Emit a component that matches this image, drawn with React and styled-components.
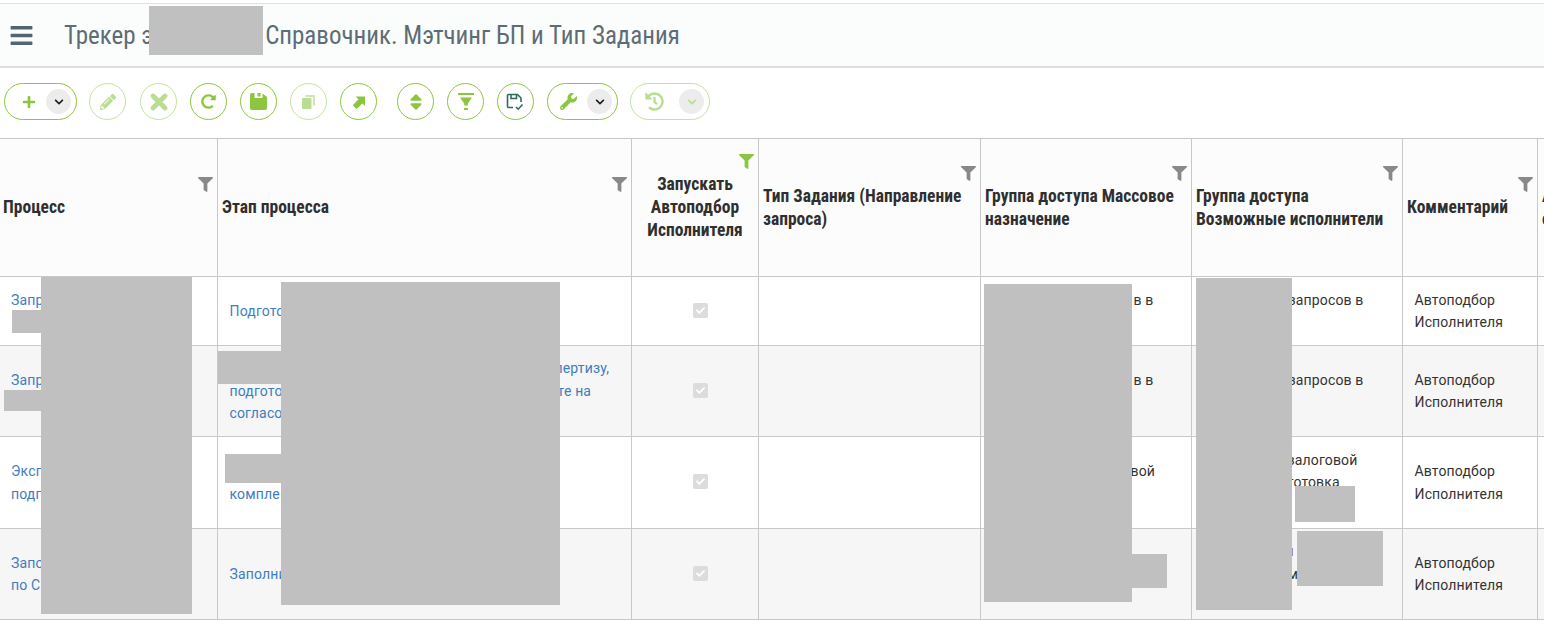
import React from 'react';
import styled, { createGlobalStyle } from 'styled-components';
import { FaBars, FaPlus, FaChevronDown, FaPencilAlt, FaRedoAlt, FaSort, FaWrench, FaHistory, FaFilter, FaCheck } from 'react-icons/fa';

const Global = createGlobalStyle`
  html, body { margin: 0; padding: 0; background: #fff; }
  body { font-family: Roboto, "Liberation Sans", sans-serif; overflow: hidden; }
`;
const Page = styled.div`position: relative; width: 1544px; height: 629px; overflow: hidden; padding-top: 3px; box-sizing: border-box;`;
const TitleBar = styled.header`
  height: 62px; display: flex; align-items: center; box-sizing: content-box;
  background: #fbfdfc; border-top: 1px solid #e2e2e2; border-bottom: 2px solid #dedede;
`;
const Burger = styled.span`display: flex; margin-left: 9px; color: #526570; font-size: 25px; width: 55px;`;
const Title = styled.h1`
  margin: 0; font-weight: 400; font-size: 25px; color: #5e6c76; font-stretch: 75%;
  white-space: nowrap; display: flex;
`;
const TitleGap = styled.span`display: inline-block; width: ${p => p.$w}px;`;
const Toolbar = styled.div`display: flex; align-items: center; gap: 13px; padding: 15px 0 18px 4px; height: 37px;`;
const Circle = styled.button`
  width: 37px; height: 37px; padding: 0; border-radius: 50%; background: #fff; display: flex;
  align-items: center; justify-content: center; box-sizing: border-box; flex: none;
  border: 1px solid ${p => p.$dim ? '#c2e2a0' : '#8cc63f'};
  color: ${p => p.$dim ? '#b9dd91' : '#8cc63f'};
  font-size: ${p => p.$size || 16}px;
  margin-left: ${p => p.$shift || 0}px;
`;
const Pill = styled.div`
  height: 37px; box-sizing: border-box; border-radius: 19px; background: #fff; flex: none;
  width: ${p => p.$w}px; display: flex; align-items: center; justify-content: space-between;
  padding: 0 5px 0 ${p => p.$pl}px;
  margin-left: ${p => p.$shift || 0}px;
  border: 1px solid ${p => p.$dim ? '#c2e2a0' : '#8cc63f'};
  color: ${p => p.$dim ? '#b9dd91' : '#8cc63f'};
  font-size: ${p => p.$size || 16}px;
`;
const Caret = styled.span`
  width: 25px; height: 25px; border-radius: 50%; background: #ececec; display: flex;
  align-items: center; justify-content: center; font-size: 10px;
  color: ${p => p.$dim ? '#b9dd91' : '#1c1c1c'};
`;
const Table = styled.table`
  table-layout: fixed; width: 1688px; border-collapse: separate; border-spacing: 0;
  border-top: 1px solid #c8c8c8; font-size: 14px;
`;
const Head = styled.th`
  height: 137px; padding: 0 4px 0 4px; background: #fcfcfc; text-align: ${p => p.$center ? 'center' : 'left'};
  border-right: 1px solid #c8c8c8; border-bottom: 1px solid #c8c8c8;
  color: #2f2f2f; font-size: 17.500px; font-weight: 700; line-height: 23px; font-stretch: 75%;
  vertical-align: middle; box-sizing: content-box;
  &:first-child { padding-left: 3px; }
`;
const Label = styled.div`position: relative; white-space: nowrap;`;
const FilterMark = styled.span`
  position: absolute; right: 0; bottom: calc(100% + 4px); display: flex; font-size: 15px;
  color: ${p => p.$active ? '#8cc63f' : '#888'};
`;
const Row = styled.tr`height: ${p => p.$h}px; background: ${p => p.$alt ? '#f6f6f6' : '#fff'};`;
const Cell = styled.td`
  padding: 0 0 0 11.500px; border-right: 1px solid #c8c8c8; border-bottom: 1px solid #c8c8c8;
  line-height: 22.400px; color: #333; vertical-align: middle; white-space: nowrap; overflow: hidden;
  font-size: 14px; letter-spacing: 0.15px;
  &:first-child { padding-left: 11px; }
`;
const LinkCell = styled(Cell)`color: #3f7dbf;`;
const CenterCell = styled(Cell)`padding: 0 0 0 10px; text-align: center; line-height: 0;`;
const Gap = styled.span`display: inline-block; width: ${p => p.$w}px;`;
const RedLetter = styled.span`color: #8b3a1a;`;
const Check = styled.span`
  display: inline-flex; width: 15px; height: 15px; border-radius: 2px; background: #dcdcdc; margin-bottom: 2px;
  color: #fff; font-size: 9px; align-items: center; justify-content: center; vertical-align: top;
`;
const Mask = styled.div`
  position: absolute; background: #c0c0c0; left: ${p => p.$x}px; top: ${p => p.$y}px;
  width: ${p => p.$r - p.$x}px; height: ${p => p.$b - p.$y}px;
`;

const ArrowUpRight = () => (
  <svg width="14" height="14" viewBox="0 0 14 14" fill="currentColor"><path d="M3.500 1.500H13v9.500l-2.600-2.600-5.900 5.600L.800 10.300l5.700-6z" /></svg>
);
const FunnelBars = () => (
  <svg width="16" height="20" viewBox="0 0 16 20" fill="currentColor"><path d="M0 1h16v2H0zM2 5.500h12L9.800 11.500v2H6.200v-2zM6 16h4v2H6z" /></svg>
);
const SaveCheck = () => (
  <svg width="19" height="18" viewBox="0 0 19 18" fill="none" stroke="#2f6b5c" strokeWidth="1.600"><path d="M7 14.500H2.500a1 1 0 0 1-1-1V2.500a1 1 0 0 1 1-1h9l3.500 3.500v4" /><path d="M5 1.500v4h5.500v-4" /><path d="M10 14l2.200 2.200 4.300-4.700" /></svg>
);
const BoldCross = () => (
  <svg width="18" height="18" viewBox="0 0 18 18" fill="none" stroke="currentColor" strokeWidth="4.800" strokeLinecap="round"><path d="M3 3l12 12M15 3L3 15" /></svg>
);
const FloppySolid = () => (
  <svg width="17" height="17" viewBox="0 0 17 17" fill="currentColor"><path d="M2 0h2.500v5h8V.3L17 4v11a2 2 0 0 1-2 2H2a2 2 0 0 1-2-2V2a2 2 0 0 1 2-2zM7.500 0h3v3.500h-3z" /></svg>
);
const TwoSheets = () => (
  <svg width="13" height="14" viewBox="0 0 13 14" fill="currentColor"><path opacity=".7" d="M3.500 0H13v10.500h-2V2H3.500z" /><rect x="0" y="3" width="9.500" height="11" rx="1" /></svg>
);

const heads = [
  ['Процесс'], ['Этап процесса'], ['Запускать', 'Автоподбор', 'Исполнителя'],
  ['Тип Задания (Направление', 'запроса)'], ['Группа доступа Массовое', 'назначение'],
  ['Группа доступа', 'Возможные исполнители'], ['Комментарий'],
];
const widths = [218, 414, 127, 222, 211, 211, 135, 150];
const lines = (arr) => arr.map((l, i) => <React.Fragment key={i}>{i > 0 && <br />}{l}</React.Fragment>);
const B = '\u00a0';

const rows = [
  { h: 69, alt: false, a: ['Запр', B], b: ['Подгото'], e: [<><Gap $w={141} />в в</>, B], f: [<><Gap $w={85} />запросов в</>, B] },
  { h: 91, alt: true, a: ['Запр', B], b: [<><Gap $w={325} />пертизу,</>, <>подгото<Gap $w={275} />те на</>, 'согласо'], e: [<><Gap $w={141} />в в</>, B], f: [<><Gap $w={85} />запросов в</>, B] },
  { h: 92, alt: false, a: ['Эксп', 'подг'], b: [B, 'компле'], e: [<><Gap $w={138} />вой</>, B], f: [<><Gap $w={84} />залоговой</>, <><Gap $w={84} />готовка</>, B] },
  { h: 91, alt: true, a: ['Запо', 'по С'], b: ['Заполни'], e: [B], f: [<><Gap $w={82} /><RedLetter>н</RedLetter></>, <><Gap $w={84} />м</>, B] },
];
const masks = [
  [149, 6, 263, 55], [41, 277, 192, 614], [12, 310, 41, 333], [4, 390, 41, 411],
  [281, 282, 560, 605], [218, 351, 281, 384], [225, 454, 281, 483],
  [984, 284, 1132, 602], [1132, 554, 1167, 588],
  [1196, 278, 1292, 610], [1295, 486, 1355, 522], [1297, 531, 1383, 586],
];

export default function App() {
  return (
    <Page>
      <Global />
      <TitleBar>
        <Burger><FaBars /></Burger>
        <Title>Трекер э<TitleGap $w={112} />Справочник. Мэтчинг БП и Тип Задания</Title>
      </TitleBar>
      <Toolbar>
        <Pill $w={73} $pl={17}><FaPlus size={14} /><Caret><FaChevronDown /></Caret></Pill>
        <Circle $dim $shift={-1}><FaPencilAlt /></Circle>
        <Circle $dim $shift={1}><BoldCross /></Circle>
        <Circle $size={15}><FaRedoAlt /></Circle>
        <Circle><FloppySolid /></Circle>
        <Circle $dim><TwoSheets /></Circle>
        <Circle><ArrowUpRight /></Circle>
        <Circle $shift={7} $size={20}><FaSort /></Circle>
        <Circle><FunnelBars /></Circle>
        <Circle><SaveCheck /></Circle>
        <Pill $w={71} $pl={12} $size={17}><FaWrench /><Caret><FaChevronDown /></Caret></Pill>
        <Pill $dim $shift={-1} $w={80} $pl={14} $size={19}><FaHistory /><Caret $dim><FaChevronDown /></Caret></Pill>
      </Toolbar>
      <Table>
        <colgroup>{widths.map((w, i) => <col key={i} width={w} />)}</colgroup>
        <thead>
          <tr>
            {heads.map((h, i) => (
              <Head key={i} $center={i === 2}>
                <Label>{lines(h)}<FilterMark $active={i === 2}><FaFilter /></FilterMark></Label>
              </Head>
            ))}
            <Head><Label>А<br />с</Label></Head>
          </tr>
        </thead>
        <tbody>
          {rows.map((r, i) => (
            <Row key={i} $h={r.h} $alt={r.alt}>
              <LinkCell>{lines(r.a)}</LinkCell>
              <LinkCell>{lines(r.b)}</LinkCell>
              <CenterCell><Check><FaCheck /></Check></CenterCell>
              <Cell />
              <Cell>{lines(r.e)}</Cell>
              <Cell>{lines(r.f)}</Cell>
              <Cell>Автоподбор<br />Исполнителя</Cell>
              <Cell />
            </Row>
          ))}
        </tbody>
      </Table>
      {masks.map((m, i) => <Mask key={i} $x={m[0]} $y={m[1]} $r={m[2]} $b={m[3]} />)}
    </Page>
  );
}
